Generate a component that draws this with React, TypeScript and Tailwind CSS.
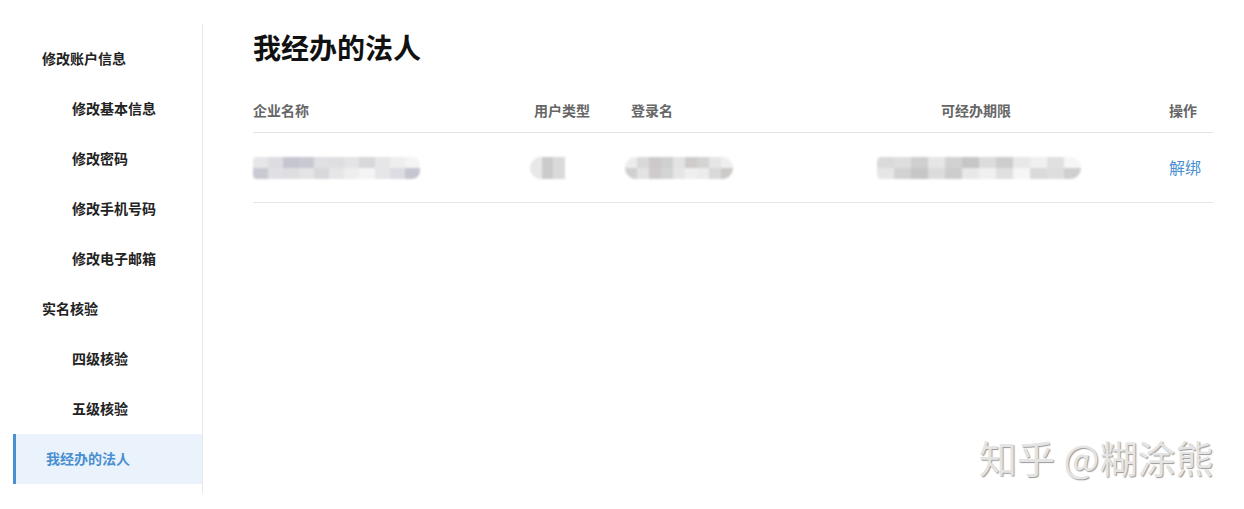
import React from "react";

const font = { fontFamily: '"Noto Sans CJK SC", "Noto Sans", sans-serif' };

type Item = { label: string; level: 0 | 1; active?: boolean };
const items: Item[] = [
  { label: "修改账户信息", level: 0 },
  { label: "修改基本信息", level: 1 },
  { label: "修改密码", level: 1 },
  { label: "修改手机号码", level: 1 },
  { label: "修改电子邮箱", level: 1 },
  { label: "实名核验", level: 0 },
  { label: "四级核验", level: 1 },
  { label: "五级核验", level: 1 },
  { label: "我经办的法人", level: 0, active: true },
];

function Blur({ colors, w, round = "rounded-md" }: { colors: string[]; w: number; round?: string }) {
  return (
    <div className={`flex h-[22px] overflow-hidden blur-[1px] ${round}`} style={{ width: w }}>
      {colors.map((c, i) => (
        <div key={i} className="flex-1 flex flex-col">
          <div className="flex-1" style={{ background: c }} />
          <div className="flex-1" style={{ background: colors[(i + 3) % colors.length] }} />
        </div>
      ))}
    </div>
  );
}

export default function App() {
  return (
    <div className="relative w-[1244px] h-[509px] bg-white overflow-hidden" style={font}>
      <div className="flex pt-[24px]">
        {/* sidebar */}
        <div className="ml-[13px] w-[190px] border-r border-[#e8e8e8] pt-[9px] pb-[10px]">
          {items.map((it) =>
            it.active ? (
              <div
                key={it.label}
                className="h-[50px] mt-[1px] -mb-[1px] flex items-center border-l-[3px] border-[#4a8fd0] bg-[#eaf3fb] pl-[30px] pb-[1px] text-[14px] font-bold text-[#4a8fd0]"
              >
                {it.label}
              </div>
            ) : (
              <div
                key={it.label}
                className={`h-[50px] flex items-center text-[14px] font-bold text-[#222] ${
                  it.level === 0 ? "pl-[29px]" : "pl-[59px]"
                }`}
              >
                {it.label}
              </div>
            )
          )}
        </div>

        {/* main */}
        <div className="flex-1 pl-[50px] pr-[31px] pt-[5px]">
          <h1 className="text-[28px] leading-[36px] font-bold text-[#111]">我经办的法人</h1>
          <div className="mt-[23px]">
            <div className="flex h-[45px] items-center pt-[1px] border-b border-[#e5e5e5] text-[14px] font-bold text-[#666]">
              <div className="w-[281px]">企业名称</div>
              <div className="w-[97px]">用户类型</div>
              <div className="w-[195px]">登录名</div>
              <div className="w-[300px] text-center">可经办期限</div>
              <div className="flex-1 text-right pr-[16px]">操作</div>
            </div>
            <div className="flex h-[70px] items-center pt-[1px] border-b border-[#e5e5e5]">
              <div className="w-[281px]">
                <Blur
                  w={167}
                  round="rounded-r-lg rounded-l-sm"
                  colors={["#e6e6e9", "#dcdce2", "#c6c6d1", "#c9c9d2", "#e0e0e4", "#dedee1", "#e4e4e6", "#d8d8dc", "#e6e6e8", "#eeeeef", "#f4f4f5"]}
                />
              </div>
              <div className="w-[97px] -ml-[4px]">
                <Blur w={35} round="rounded-l-xl" colors={["#e8e8e8", "#cbcbcb", "#dadada"]} />
              </div>
              <div className="w-[195px] -ml-[2px]">
                <Blur
                  w={108}
                  round="rounded-xl"
                  colors={["#ececec", "#d9d9d9", "#cdc9c9", "#d0d0d0", "#e3e3e3", "#cfcbcb", "#d4d4d4", "#e6e6e6", "#efefef"]}
                />
              </div>
              <div className="w-[300px] flex justify-center pl-[18px]">
                <Blur
                  w={204}
                  round="rounded-r-2xl rounded-l-md"
                  colors={["#dadada", "#dedede", "#cfcfcf", "#e6e6e6", "#d2d2d2", "#c6c6c6", "#dcdcdc", "#cdcdcd", "#e8e8e8", "#f0f0f0", "#e0e0e0", "#f6f6f6"]}
                />
              </div>
              <div className="flex-1 text-right pr-[12px] pb-[2px] text-[16px] text-[#4a8fd0]">解绑</div>
            </div>
          </div>
        </div>
      </div>

      {/* watermark */}
      <div
        className="absolute left-[979px] top-[432px] text-[38px] leading-[50px] text-[#e4e4e4] whitespace-nowrap"
        style={{ textShadow: "1px 1px 1px #9a9a9a" }}
      >
        知乎 @糊涂熊
      </div>
    </div>
  );
}
